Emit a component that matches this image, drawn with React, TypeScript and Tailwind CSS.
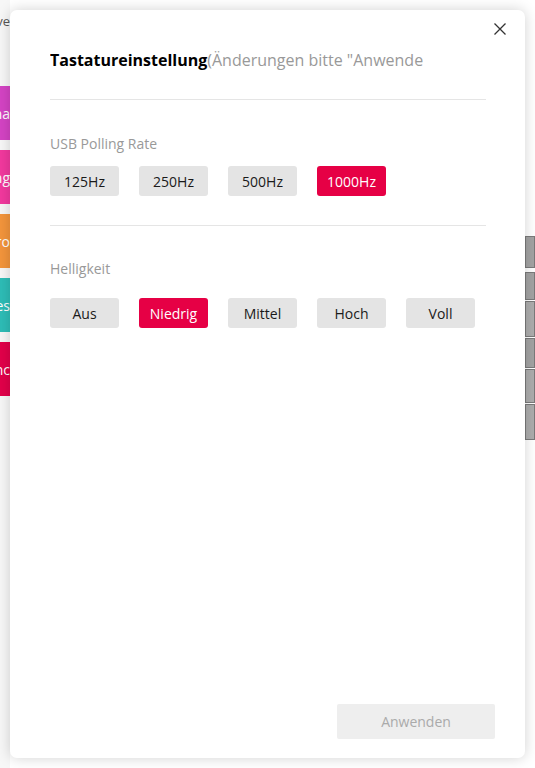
import { useState } from "react"

const rates = ["125Hz", "250Hz", "500Hz", "1000Hz"]
const levels = ["Aus", "Niedrig", "Mittel", "Hoch", "Voll"]

const tabs = [
  { label: "Farbschema", color: "bg-[#d444c4]" },
  { label: "Belegung", color: "bg-[#f2399e]" },
  { label: "Makro", color: "bg-[#f3953c]" },
  { label: "Profiles", color: "bg-[#2ebdb7]" },
  { label: "Sync", color: "bg-[#e2004a]" },
]

function Option({ label, active, onClick }: { label: string; active: boolean; onClick: () => void }) {
  return (
    <button
      onClick={onClick}
      className={`w-[69px] h-[30px] rounded-[3px] text-[14px] ${
        active ? "bg-[#e60045] text-white" : "bg-[#e4e4e4] text-[#1a1a1a]"
      }`}
    >
      {label}
    </button>
  )
}

export default function App() {
  const [rate, setRate] = useState("1000Hz")
  const [level, setLevel] = useState("Niedrig")

  return (
    <div
      className="relative w-[535px] h-[768px] overflow-hidden bg-white"
      style={{ fontFamily: '"Open Sans", "Noto Sans", sans-serif' }}
    >
      {/* app behind the dialog */}
      <div className="flex h-full">
        <div className="w-[10px] flex flex-col bg-[#f7f7f7]">
          <div className="h-[86px] pt-[12px] flex justify-end overflow-hidden text-[13px] text-[#555] whitespace-nowrap">
            Übersicht ve
          </div>
          <div className="flex flex-col gap-[10px]">
            {tabs.map((t) => (
              <div
                key={t.label}
                className={`h-[54px] flex items-center justify-end overflow-hidden whitespace-nowrap text-[14px] text-white ${t.color}`}
              >
                {t.label}
              </div>
            ))}
          </div>
        </div>
        <div className="flex-1" />
        <div className="w-[10px] pt-[236px] flex flex-col gap-[1px]">
          <div className="h-[32px] bg-[#a3a3a3] border border-[#7a7a7a]" />
          <div className="h-[2px] bg-white" />
          <div className="h-[28px] bg-[#a3a3a3] border border-[#7a7a7a]" />
          <div className="h-[36px] bg-[#adadad] border border-[#7a7a7a]" />
          <div className="h-[30px] bg-[#a3a3a3] border border-[#7a7a7a]" />
          <div className="h-[34px] bg-[#adadad] border border-[#7a7a7a]" />
          <div className="h-[36px] bg-[#adadad] border border-[#7a7a7a]" />
        </div>
      </div>

      {/* dialog */}
      <div className="absolute left-[10px] top-[10px] w-[515px] h-[748px] bg-white rounded-[7px] shadow-[0_0_14px_rgba(0,0,0,0.18)] flex flex-col pl-[40px] pr-[39px]">
        <button className="absolute right-[18px] top-[12px] w-[14px] h-[14px] text-[#333]">
          <svg viewBox="0 0 14 14" width="14" height="14" fill="none" stroke="currentColor" strokeWidth="1.3">
            <path d="M1.5 1.5l11 11M12.5 1.5l-11 11" />
          </svg>
        </button>

        <div className="mt-[38px] w-[373px] overflow-hidden whitespace-nowrap text-[16px] leading-[24px]">
          <span className="font-bold text-black">Tastatureinstellung</span>
          <span className="text-[#999]">(Änderungen bitte "Anwenden" klicken)</span>
        </div>
        <div className="mt-[27px] h-px bg-[#e5e5e5]" />

        <div className="mt-[34px] text-[14px] leading-[20px] text-[#999]">USB Polling Rate</div>
        <div className="mt-[12px] flex gap-[20px]">
          {rates.map((r) => (
            <Option key={r} label={r} active={rate === r} onClick={() => setRate(r)} />
          ))}
        </div>
        <div className="mt-[29px] h-px bg-[#e5e5e5]" />

        <div className="mt-[33px] text-[14px] leading-[20px] text-[#999]">Helligkeit</div>
        <div className="mt-[19px] flex gap-[20px]">
          {levels.map((l) => (
            <Option key={l} label={l} active={level === l} onClick={() => setLevel(l)} />
          ))}
        </div>

        <div className="mt-auto mb-[19px] flex justify-end -mr-[9px]">
          <button className="w-[158px] h-[35px] rounded-[2px] bg-[#eeeeee] text-[14px] text-[#aaa]">Anwenden</button>
        </div>
      </div>
    </div>
  )
}
